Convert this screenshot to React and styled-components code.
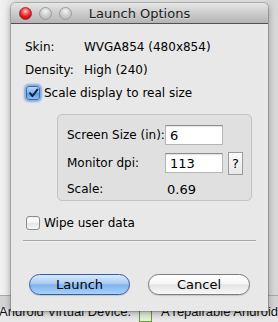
import React from "react";
import styled, { createGlobalStyle } from "styled-components";

const Global = createGlobalStyle`
  html, body { margin: 0; padding: 0; }
  body {
    width: 278px; height: 322px; overflow: hidden;
    font-family: "DejaVu Sans", "Liberation Sans", sans-serif;
    font-size: 12px; color: #000;
  }
`;

const Page = styled.div`
  position: relative;
  width: 278px;
  height: 322px;
  overflow: hidden;
`;

/* ---------- backdrop (the window behind) ---------- */
const Backdrop = styled.div`
  display: flex;
  flex-direction: column;
  height: 322px;
`;
const BackTop = styled.div`
  height: 297px;
  background: linear-gradient(90deg, #f2f2f2 0px, #e6e6e6 12px, #e4e4e4 260px, #d6d6d6 270px, #d8d8d8 100%);
  border-bottom: 1px solid #a9a9a9;
  box-sizing: border-box;
  padding-left: 57px;
`;
const BackTitle = styled.div`
  margin-top: -11px;
  line-height: 14px;
  font-size: 13px;
  color: #222;
`;
const BackBand = styled.div`
  height: 13px;
  background: #d3d3d3;
`;
const BackRow = styled.div`
  flex: 1;
  display: flex;
  align-items: flex-start;
  background: #e8e8e8;
  font-family: "Liberation Sans", "DejaVu Sans", sans-serif;
  font-size: 13px;
  line-height: 13px;
  color: #111;
  white-space: nowrap;
  margin-left: -1px;
  & > * { margin-top: -4px; }
`;
const GreenBox = styled.span`
  display: inline-block;
  flex: none;
  width: 11px;
  height: 11px;
  margin: 0 9px 0 8px;
  border: 1px solid #6a9a3a;
  background: #e6f0d8;
`;

/* ---------- dialog window ---------- */
const Window = styled.div`
  position: absolute;
  left: 11px;
  top: 3px;
  width: 257px;
  height: 308px;
  background: #e8e8e8;
  border-radius: 5px 5px 0 0;
  box-shadow: 0 0 0 1px rgba(0,0,0,0.18), 0 2px 7px rgba(0,0,0,0.35);
  display: flex;
  flex-direction: column;
  overflow: hidden;
`;
const TitleBar = styled.div`
  height: 20px;
  border-bottom: 1px solid #515151;
  background: linear-gradient(#e6e6e6 0%, #cfcfcf 45%, #b4b4b4 100%);
  display: flex;
  align-items: center;
  position: relative;
  padding-left: 8px;
  gap: 7px;
`;
const Light = styled.span`
  width: 13px;
  height: 13px;
  border-radius: 50%;
  box-sizing: border-box;
  background: ${p => p.$red
    ? "radial-gradient(circle at 50% 30%, #ffd4d4 0%, #ff6a6a 25%, #e0141a 60%, #b80a10 100%)"
    : "radial-gradient(circle at 50% 30%, #f4f4f4 0%, #d8d8d8 35%, #bdbdbd 75%, #b0b0b0 100%)"};
  border: 1px solid ${p => (p.$red ? "#9a3030" : "#9c9c9c")};
`;
const Title = styled.div`
  position: absolute;
  left: 0; right: 0; top: 0; bottom: 0;
  display: flex;
  align-items: center;
  justify-content: center;
  font-size: 13px;
  color: #1a1a1a;
  text-shadow: 0 1px 0 rgba(255,255,255,0.4);
  pointer-events: none;
`;

const Body = styled.div`
  display: flex;
  flex-direction: column;
  padding: 15px 0 0 14px;
`;
const InfoRow = styled.div`
  display: flex;
  height: 16px;
  align-items: center;
  margin-bottom: ${p => p.$mb || 0}px;
`;
const InfoLabel = styled.span`
  width: 59px;
`;

const CheckRow = styled.label`
  display: flex;
  align-items: center;
  height: 14px;
  gap: 4px;
  margin-top: ${p => p.$mt}px;
  margin-left: 1px;
`;
const Box = styled.span`
  width: 14px;
  height: 14px;
  box-sizing: border-box;
  border-radius: 3px;
  display: flex;
  align-items: center;
  justify-content: center;
  border: 1px solid ${p => (p.$checked ? "#3f68a6" : "#8c8c8c")};
  background: ${p => p.$checked
    ? "linear-gradient(#b8d6f6 0%, #7fb0ea 50%, #5a98e0 51%, #8cc0f4 100%)"
    : "linear-gradient(#ffffff 0%, #f3f3f3 50%, #e6e6e6 51%, #f6f6f6 100%)"};
  box-shadow: ${p => (p.$checked ? "0 0 2px 2px rgba(95,150,225,0.75)" : "inset 0 1px 1px rgba(0,0,0,0.08)")};
`;

const Group = styled.div`
  margin: 14px 0 0 32px;
  width: 195px;
  box-sizing: border-box;
  border: 1px solid #c3c3c3;
  border-radius: 5px;
  background: #e0e0e0;
  display: grid;
  grid-template-columns: 98px 58px auto;
  grid-template-rows: 20px 20px 16px;
  row-gap: 8px;
  padding: 10px 0 3px 9px;
  align-items: center;
`;
const Field = styled.div`
  height: 20px;
  box-sizing: border-box;
  background: #fff;
  border: 1px solid #b5b5b5;
  border-top-color: #8e8e8e;
  box-shadow: inset 0 1px 1px rgba(0,0,0,0.12);
  padding: 1px 0 0 4px;
  display: flex;
  align-items: center;
  font-size: 13px;
`;
const Help = styled.div`
  width: 15px;
  height: 23px;
  margin-left: 5px;
  box-sizing: border-box;
  border: 1px solid #9b9b9b;
  background: linear-gradient(#fafafa, #e8e8e8);
  display: flex;
  align-items: center;
  justify-content: center;
  font-size: 13px;
`;
const Value = styled.span`
  padding-left: 2px;
  font-size: 13px;
`;

const Separator = styled.div`
  margin: 10px 0 0 -2px;
  width: 233px;
  height: 1px;
  background: #a6a6a6;
  border-bottom: 1px solid #f6f6f6;
`;

const Buttons = styled.div`
  display: flex;
  gap: 18px;
  margin: 32px 0 0 4px;
`;
const Button = styled.div`
  width: ${p => p.$w}px;
  height: 21px;
  box-sizing: border-box;
  border-radius: 11px;
  display: flex;
  align-items: center;
  justify-content: center;
  font-size: 13px;
  border: 1px solid ${p => (p.$primary ? "#3a5c9e" : "#7c7c7c")};
  background: ${p => p.$primary
    ? "linear-gradient(#d6e9fb 0%, #a9cdf3 45%, #7fb3ec 52%, #a6d2fb 100%)"
    : "linear-gradient(#ffffff 0%, #f6f6f6 45%, #e4e4e4 52%, #f8f8f8 100%)"};
  box-shadow: 0 1px 1px rgba(0,0,0,0.15);
`;

const Check = () => (
  <svg width="11" height="11" viewBox="0 0 11 11">
    <path d="M2 5.2 L4.4 8.2 L9.4 1.6" fill="none" stroke="#13223a" strokeWidth="1.9" strokeLinecap="round" strokeLinejoin="round" />
  </svg>
);

export default function App() {
  return (
    <Page>
      <Global />
      <Backdrop>
        <BackTop>
          <BackTitle>Android 2.2</BackTitle>
        </BackTop>
        <BackBand />
        <BackRow>
          <span>Android Virtual Device.</span>
          <GreenBox />
          <span>A repairable Android</span>
        </BackRow>
      </Backdrop>

      <Window>
        <TitleBar>
          <Light $red />
          <Light />
          <Light />
          <Title>Launch Options</Title>
        </TitleBar>
        <Body>
          <InfoRow $mb={7}>
            <InfoLabel>Skin:</InfoLabel>
            <span>WVGA854 (480x854)</span>
          </InfoRow>
          <InfoRow>
            <InfoLabel>Density:</InfoLabel>
            <span>High (240)</span>
          </InfoRow>
          <CheckRow $mt={8}>
            <Box $checked><Check /></Box>
            <span>Scale display to real size</span>
          </CheckRow>
          <Group>
            <span>Screen Size (in):</span>
            <Field>6</Field>
            <span />
            <span>Monitor dpi:</span>
            <Field>113</Field>
            <Help>?</Help>
            <span>Scale:</span>
            <Value>0.69</Value>
            <span />
          </Group>
          <CheckRow $mt={15}>
            <Box />
            <span>Wipe user data</span>
          </CheckRow>
          <Separator />
          <Buttons>
            <Button $primary $w={101}>Launch</Button>
            <Button $w={102}>Cancel</Button>
          </Buttons>
        </Body>
      </Window>
    </Page>
  );
}
